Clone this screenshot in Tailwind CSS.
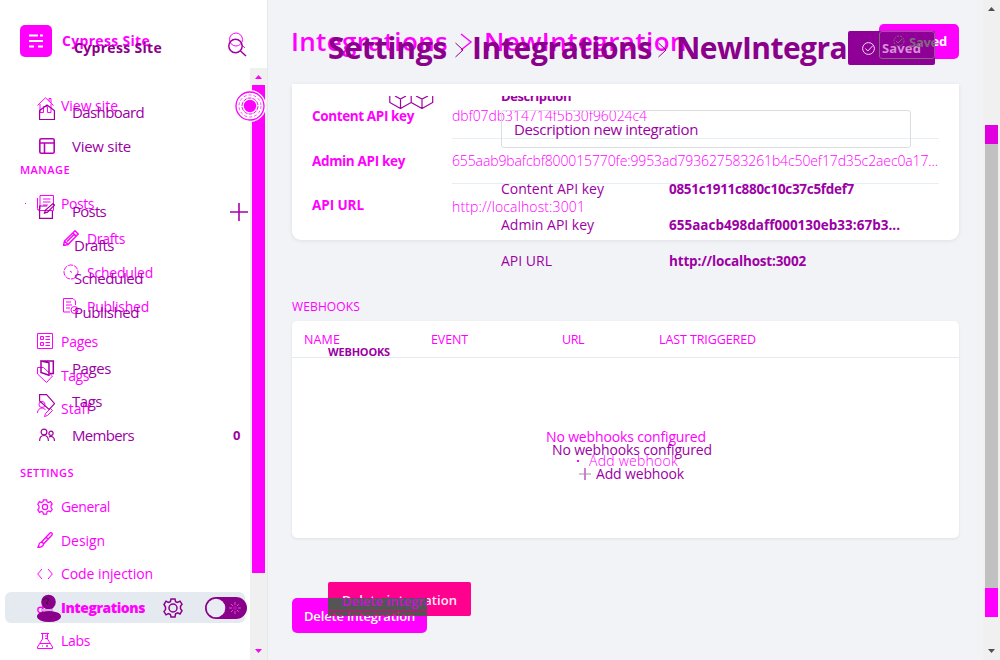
<!DOCTYPE html>
<html lang="en">
<head>
<meta charset="utf-8">
<title>Integrations</title>
<script src="https://cdn.jsdelivr.net/npm/@tailwindcss/browser@4"></script>
</head>
<body class="overflow-hidden bg-[#f2f3f7] font-['Open_Sans','Noto_Sans',sans-serif]">
<div class="grid h-[660px] w-[1000px] overflow-hidden whitespace-nowrap">

<!-- First page state -->
<div class="col-start-1 row-start-1 flex h-[660px] w-[1000px] overflow-hidden text-[#ff00ff]">
  <aside class="flex h-full w-[268px] shrink-0 border-r border-[#e4e8ee] bg-white text-[14px]">
    <nav class="h-full w-[250px] shrink-0">
      <div class="flex h-[88px] items-start pt-[25px] pl-[20px]">
        <svg class="size-[32px] shrink-0" viewBox="0 0 32 32"><rect width="32" height="32" rx="5" fill="#f0f"/><path d="M9 10.500h9M20 10.500h3M9 16h14M9 21.500h5M18 21.500h5" stroke="#fff" stroke-width="2.200"/></svg>
        <b class="ml-[10px] w-[88px] leading-[32px]" data-w="88">Cypress Site</b>
        <svg class="mt-[7px] ml-[77px] size-[19px]" viewBox="0 0 19 19" fill="none" stroke="#f0f"><circle cx="9" cy="7.500" r="6.500"/><path d="M14 12l4 4"/></svg>
      </div>
      <div class="flex h-[34px] items-center pt-px pl-[37px]"><svg class="mr-[7px] size-[17px]" viewBox="0 0 17 17" fill="none" stroke="#f0f"><path d="M.5 8.500L8.500.8 16.500 8.500M3 7v8.500h3.500v-6h4v6H14V7M12 4V1.500h2V6"/></svg><span data-w="57">View site</span></div>
      <div class="mt-[38px] flex h-[20px] items-center pl-[20px] text-[11px] font-semibold"><span data-w="50">MANAGE</span></div>
      <div class="mt-[6px] flex h-[34px] items-center pl-[25px]"><i class="mr-[11px] size-px bg-[#f0f]"></i><svg class="mr-[7px] size-[17px]" viewBox="0 0 17 17" fill="none" stroke="#f0f"><path d="M3 .5h13.500v15H2.500A2 2 0 0 1 .5 13.500V3M3 .5v13a1.500 1.500 0 0 1-2.500 1M6 4h7.500M6 7h7.500M6 10h5"/></svg><span data-w="33">Posts</span></div>
      <div class="mt-px flex h-[34px] items-center pl-[63px]"><svg class="mr-[8px] size-[16px]" viewBox="0 0 16 16" fill="none" stroke="#f0f" stroke-width="1.400"><path d="M.5 15.500l1-4.500L12 .8 15.200 4 5 14.500zM1.500 11L5 14.500M10 3l3.200 3.200M4 11.500l7-7"/></svg><span data-w="38">Drafts</span></div>
      <div class="flex h-[34px] items-center pl-[63px]"><svg class="mr-[8px] size-[16px]" viewBox="0 0 16 16" fill="none" stroke="#f0f"><circle cx="8" cy="8" r="7" stroke-dasharray="5 1"/><path d="M7 7l2 1.500"/></svg><span data-w="66">Scheduled</span></div>
      <div class="flex h-[34px] items-center pl-[63px]"><svg class="mr-[8px] size-[16px]" viewBox="0 0 16 16" fill="none" stroke="#f0f"><path d="M7 14H.5V.5H10L12.500 3v4M3 4h5M3 7h6M3 10h4"/><circle cx="11.500" cy="12" r="3.500"/><path d="M10 12l1 1 2-2"/></svg><span data-w="62">Published</span></div>
      <div class="mt-px flex h-[34px] items-center pl-[37px]"><svg class="mr-[8px] size-[16px]" viewBox="0 0 16 16" fill="none" stroke="#f0f"><path d="M.5.5h15v15H.5zM3.500 3.500h3v3h-3zM3.500 9.500h3v3h-3zM8.500 3.500H13M8.500 6.500H13M8.500 9.500H13M8.500 12.500H13"/></svg><span data-w="37">Pages</span></div>
      <div class="flex h-[34px] items-center pl-[37px]"><svg class="mr-[8px] size-[16px]" viewBox="0 0 16 16" fill="none" stroke="#f0f"><path d="M.5.5h6l9 8.500-6 6.500L.5 7z"/></svg><span data-w="28">Tags</span></div>
      <div class="flex h-[33px] items-center pl-[37px]"><svg class="mr-[8px] size-[16px]" viewBox="0 0 16 16" fill="none" stroke="#f0f"><circle cx="5" cy="3.500" r="3"/><path d="M.5 12c0-3 2-5 4.500-5 1.500 0 3 1 3.500 2M7.500 15.500l1-3 5-5 2 2-5 5z"/></svg><span data-w="30">Staff</span></div>
      <div class="mt-[38px] flex h-[20px] items-center pl-[20px] text-[11px] font-semibold"><span data-w="54">SETTINGS</span></div>
      <div class="mt-[6px] flex h-[34px] items-center pt-px pl-[37px]"><svg class="mr-[8px] size-[16px]" viewBox="0 0 20 20" fill="none" stroke="#f0f" stroke-width="1.500"><path d="M8 1h4l.6 2.600 2 .9 2.400-1.300 2 3-1.500 2v2.600l1.500 2-2 3.200-2.400-1.200-2 .9L12 19H8l-.6-2.500-2-.9L3 16.800l-2-3.200 1.500-2V9L1 6.500l2-3.300 2.400 1.300 2-.9z"/><circle cx="10" cy="10" r="3.300"/></svg><span data-w="49">General</span></div>
      <div class="flex h-[34px] items-center pl-[37px]"><svg class="mr-[8px] size-[16px]" viewBox="0 0 16 16" fill="none" stroke="#f0f" stroke-width="1.300"><path d="M.5 15.500c2-1 .5-4 3-5s4 2 2 3.500-3.500 1.500-5 1.500zM4.500 10L13 1c1-1 3 .5 2 2L6.500 12M9 5l2 2"/></svg><span data-w="44">Design</span></div>
      <div class="flex h-[33px] items-center pl-[37px]"><svg class="mr-[8px] size-[16px]" viewBox="0 0 16 16" fill="none" stroke="#f0f"><path d="M5 3L.7 8 5 13M11 3l4.300 5L11 13"/></svg><span data-w="92">Code injection</span></div>
      <div class="flex h-[34px] items-center pl-[5px]"><div class="flex h-[31px] w-[240px] items-center rounded-md bg-[#e5eaf1] pl-[32px]"><svg class="mr-[8px] size-[16px]" viewBox="0 0 16 16" fill="none" stroke="#f0f" stroke-width="1.400"><circle cx="3.500" cy="11" r="2.700"/><circle cx="12" cy="11" r="3"/><path d="M5 9l3-4"/></svg><span class="font-extrabold" data-w="84">Integrations</span></div></div>
      <div class="flex h-[33px] items-center pl-[37px]"><svg class="mr-[8px] size-[16px]" viewBox="0 0 16 16" fill="none" stroke="#f0f"><path d="M4 .5h8M5.500.5V6l-5 8v1.500h15V14l-5-8V.5M3 10.500h10M8 3h2.500M8 5.500h2.500M5 13h1M10 12v2M9 13h2"/></svg><span data-w="29">Labs</span></div>
    </nav>
    <div class="mt-[68px] flex h-[592px] w-[17px] shrink-0 flex-col items-center bg-[#f0f0f0]">
      <svg class="h-[17px] w-[9px]" viewBox="0 0 9 17"><path d="M1 11h7L4.500 7z" fill="#f0f"/></svg>
      <div class="h-[488px] w-[13px] bg-[#f0f]"></div>
      <svg class="mt-auto h-[17px] w-[9px]" viewBox="0 0 9 17"><path d="M1 6h7L4.500 10z" fill="#f0f"/></svg>
    </div>
  </aside>

  <main class="w-[715px] shrink-0 pl-[24px]">
    <header class="flex h-[84px] items-start pt-[24px] text-[26px] font-semibold">
      <span class="-ml-[1px] w-[157px] shrink-0 leading-[35px]" data-w="157">Integrations</span>
      <svg class="mt-[8px] mr-[11px] ml-[12px] h-[20px] w-[13px] shrink-0" viewBox="0 0 13 20" fill="none" stroke="#f0f" stroke-width="1.400"><path d="M1 2l10 8-10 8"/></svg>
      <span class="w-[204px] shrink-0 leading-[35px]" data-w="203">NewIntegration</span>
      <div class="ml-auto flex h-[35px] w-[80px] -translate-x-[24px] items-center justify-end rounded-[5px] bg-[#f0f] pr-[12px] text-[13px] font-bold text-white"><span data-w="37">Saved</span></div>
    </header>
    <section class="h-[156px] w-[667px] rounded-b-[9px] bg-white pt-[10px] pl-[20px] text-[14px] shadow-[0_1px_4px_rgba(0,0,0,0.08)]">
      <div class="flex h-[45px] w-[627px]"><b class="w-[140px] leading-[44px]"><span data-w="102" class="text-[13.500px]">Content API key</span></b><div class="h-[45px] flex-1 border-b border-[#e5eff5] font-light leading-[44px]"><span data-w="195">dbf07db314714f5b30f96024c4</span></div></div>
      <div class="flex h-[45px] w-[627px]"><b class="w-[140px] leading-[43px]"><span data-w="93" class="text-[13.500px]">Admin API key</span></b><div class="h-[45px] flex-1 border-b border-[#e5eff5] font-light leading-[44px]"><span data-w="486">655aab9bafcbf800015770fe:9953ad793627583261b4c50ef17d35c2aec0a17...</span></div></div>
      <div class="flex h-[45px] w-[627px]"><b class="w-[140px] leading-[42px]"><span data-w="52" class="text-[13.500px]">API URL</span></b><div class="font-light leading-[45px]"><span data-w="133">http://localhost:3001</span></div></div>
    </section>
    <h2 class="mt-[57px] h-[24px] text-[12px] leading-[19px]"><span data-w="68">WEBHOOKS</span></h2>
    <section class="h-[217px] w-[667px] rounded-[5px] bg-white shadow-[0_1px_3px_rgba(0,0,0,0.08)]">
      <div class="flex h-[37px] items-center border-b border-[#e5ebf1] pt-[3px] pl-[12px] text-[12.500px]">
        <div class="w-[127px]"><span data-w="36">NAME</span></div><div class="w-[131px]"><span data-w="37">EVENT</span></div><div class="w-[97px]"><span data-w="22">URL</span></div><div><span data-w="97">LAST TRIGGERED</span></div>
      </div>
      <div class="pt-[67px] pl-[254px] text-[14px] leading-[24px]"><span data-w="160">No webhooks configured</span><div class="flex items-center pl-[31px]"><i class="mr-[10px] size-[2px] bg-[#f0f]"></i><span class="font-light" data-w="89">Add webhook</span></div></div>
    </section>
    <div class="mt-[60px] flex h-[35px] w-[135px] items-center justify-center rounded-[5px] bg-[#f0f] pt-[3px] text-[13px] font-semibold text-white"><span data-w="111">Delete integration</span></div>
  </main>

  <div class="flex h-full w-[17px] shrink-0 flex-col items-center bg-[#f0f0f0]">
    <svg class="h-[17px] w-[9px]" viewBox="0 0 9 17"><path d="M1 11h7L4.500 7z" fill="#505050"/></svg>
    <div class="mt-[108px] h-[19px] w-[13px] bg-[#e000e0]"></div>
    <div class="h-[444px] w-[13px] bg-[#c1c1c1]"></div>
    <div class="h-[29px] w-[13px] bg-[#f0f]"></div>
    <svg class="mt-auto h-[17px] w-[9px]" viewBox="0 0 9 17"><path d="M1 6h7L4.500 10z" fill="#505050"/></svg>
  </div>
</div>

<!-- Second page state, laid over the first -->
<div class="relative col-start-1 row-start-1 flex h-[660px] w-[1000px] overflow-hidden text-[#9c00a4]">
  <nav class="flex h-full w-[268px] shrink-0 flex-col text-[15px]">
    <div class="flex h-[95px] items-start pt-[32px] pl-[74px] text-[#8b008b]">
      <b class="w-[88px] text-[14px] leading-[31px]" data-w="88">Cypress Site</b>
      <svg class="mt-[6px] ml-[66px] size-[19px]" viewBox="0 0 19 19" fill="none" stroke="#a000a0" stroke-width="1.500"><circle cx="7.500" cy="8" r="6.700"/><path d="M12.500 13l5.500 5"/></svg>
    </div>
    <div class="flex h-[34px] items-center pl-[39px]"><svg class="mr-[17px] size-[16px]" viewBox="0 0 16 16" fill="none" stroke="#a000a0" stroke-width="1.200"><path d="M.6 6.500L8 1l7.400 5.500v9H.6z"/></svg><span data-w="72">Dashboard</span></div>
    <div class="flex h-[34px] items-center pl-[39px]"><svg class="mr-[17px] size-[16px]" viewBox="0 0 16 16" fill="none" stroke="#b800b8" stroke-width="1.600"><rect x=".8" y=".8" width="14.400" height="14.400" rx="1.500"/><path d="M.8 5h14.400M5.500 5v10"/></svg><span data-w="59">View site</span></div>
    <div class="mt-[31px] flex h-[34px] items-center pl-[39px]"><svg class="mr-[17px] size-[16px]" viewBox="0 0 16 16" fill="none" stroke="#a000a0" stroke-width="1.200"><path d="M8 3H.6v12.400h12.800V8M5.500 10l1-3L14 .6l1.500 1.500-7 7z"/></svg><span class="w-[158px]" data-w="34">Posts</span><svg class="mt-[1px] size-[18px]" viewBox="0 0 18 18" stroke="#a800a8" stroke-width="1.600"><path d="M9 0v18M0 9h18"/></svg></div>
    <div class="flex h-[34px] items-center pl-[74px]"><span data-w="40">Drafts</span></div>
    <div class="flex h-[33px] items-center pl-[74px]"><span data-w="69">Scheduled</span></div>
    <div class="flex h-[34px] items-center pl-[74px]"><span data-w="65">Published</span></div>
    <div class="mt-[22px] flex h-[34px] items-center pl-[39px]"><svg class="mr-[17px] size-[16px]" viewBox="0 0 16 16" fill="none" stroke="#a000a0" stroke-width="1.500"><path d="M2 1h12.300v12.500H11M2 1l8 1.800v12.500L2 12.500z"/></svg><span data-w="39">Pages</span></div>
    <div class="flex h-[33px] items-center pl-[39px]"><svg class="mr-[17px] size-[16px]" viewBox="0 0 16 16" fill="none" stroke="#a000a0" stroke-width="1.200"><path d="M.6.6h7l8 9-5.500 5.800L.6 7z"/></svg><span data-w="30">Tags</span></div>
    <div class="flex h-[34px] items-center pl-[39px]"><svg class="mr-[17px] size-[16px]" viewBox="0 0 16 16" fill="none" stroke="#a000a0" stroke-width="1.200"><circle cx="5" cy="5" r="2.900"/><circle cx="12" cy="6.300" r="2.100"/><path d="M.6 14c0-3.500 2-5.500 4.400-5.500s4.400 2 4.400 5.500M10 10c3-1.500 5.500.5 5.500 4"/></svg><span class="w-[161px]" data-w="62">Members</span><span class="pt-[2px] text-[13px] font-bold">0</span></div>
    <div class="mt-[141px] flex h-[30px] items-center pl-[37px]">
      <svg class="-mr-px h-[28px] w-[24px]" viewBox="0 0 24 28"><circle cx="11.500" cy="8" r="7.300" fill="#8b008b"/><ellipse cx="12" cy="22.500" rx="12" ry="5.500" fill="#8b008b"/><rect x="4" y="15" width="12" height="2" fill="#cfabda"/><path d="M6 6l3-2 3 2-3 3 2 1" fill="none" stroke="#301030"/></svg>
      <svg class="mr-[22px] ml-[103px] size-[20px]" viewBox="0 0 20 20" fill="none" stroke="#8b008b" stroke-width="1.500"><path d="M8 1h4l.6 2.600 2 .9 2.400-1.300 2 3-1.500 2v2.600l1.500 2-2 3.200-2.400-1.200-2 .9L12 19H8l-.6-2.500-2-.9L3 16.800l-2-3.200 1.500-2V9L1 6.500l2-3.300 2.400 1.300 2-.9z"/><circle cx="10" cy="10" r="4"/></svg>
      <svg class="h-[22px] w-[42px]" viewBox="0 0 42 22"><rect width="42" height="22" rx="11" fill="#8b008b"/><circle cx="11" cy="11" r="9.300" fill="#e9edf3"/><path d="M30 5v3M30 14v3M24 11h3M33 11h3M26 7l2 2M32 13l2 2M34 7l-2 2M28 13l-2 2" stroke="#c65cc6"/><circle cx="30" cy="11" r="2" fill="#c000c0"/></svg>
    </div>
  </nav>
  <main class="h-full w-[715px] shrink-0">
    <header class="flex h-[96px] items-start pt-[31px] pl-[60px] text-[30px] font-bold text-[#8b008b]">
      <div class="flex h-[40px] w-[520px] shrink-0 items-start overflow-hidden leading-[33px]">
        <span class="w-[119px] shrink-0" data-w="119">Settings</span>
        <svg class="mt-[11px] mr-[8px] ml-[8px] h-[16px] w-[9px] shrink-0" viewBox="0 0 9 16" fill="none" stroke="#8b008b"><path d="M.5 1L8 8 .5 15"/></svg>
        <span class="w-[180px] shrink-0" data-w="180">Integrations</span>
        <svg class="mt-[11px] mr-[9px] ml-[6px] h-[16px] w-[9px] shrink-0" viewBox="0 0 9 16" fill="none" stroke="#8b008b"><path d="M.5 1L8 8 .5 15"/></svg>
        <span class="shrink-0" data-w="171">NewIntegra</span>
      </div>
      <div class="flex h-[34px] w-[87px] shrink-0 items-center rounded-[2px] bg-[#8f0096] pt-[1px] pl-[14px] text-[13px] text-[#f3dff3]">
        <svg class="mr-[7px] size-[13px]" viewBox="0 0 13 13" fill="none" stroke="#f3dff3"><circle cx="6.500" cy="6.500" r="5.900"/><path d="M3.500 6.500l2.300 2.500L11 3.500"/></svg><span class="pt-px text-[#d890d8]" data-w="39">Saved</span>
      </div>
    </header>
    <div class="h-[564px] overflow-hidden">
      <div class="flex h-[14px]">
        <svg class="ml-[121px] h-[13px] w-[45px] shrink-0" viewBox="0 0 45 13" fill="none" stroke="#a000a0" stroke-width="1.200"><path d="M.8 0v6.500L11.500 12.500 22.200 6.500V0M22.200 6.500L33 12.500l10.700-6V0M6 0l5.500 3L17 0M11.500 3v9.500M27 0l6 3 6-3M33 3v9.500"/></svg>
        <span class="-mt-[9px] ml-[67px] h-[18px] text-[13px] font-bold leading-[18px]" data-w="70">Description</span>
      </div>
      <div class="ml-[233px] flex h-[38px] w-[410px] items-center rounded-[3px] border border-[#dcdde0] pl-[12px] text-[15px]"><span data-w="184">Description new integration</span></div>
      <div class="mt-[23px] ml-[233px] text-[14px] leading-[36px]">
        <div class="flex h-[36px]"><div class="w-[168px]"><span data-w="103">Content API key</span></div><b class="font-bold"><span class="text-[13.500px]" data-w="185">0851c1911c880c10c37c5fdef7</span></b></div>
        <div class="flex h-[36px]"><div class="w-[168px]"><span data-w="93">Admin API key</span></div><b class="font-bold"><span class="text-[13.500px]" data-w="231">655aacb498daff000130eb33:67b3...</span></b></div>
        <div class="flex h-[36px]"><div class="w-[168px]"><span data-w="51">API URL</span></div><b class="font-bold"><span class="text-[13.500px]" data-w="137">http://localhost:3002</span></b></div>
      </div>
      <div class="mt-[63px] ml-[60px] h-[20px] text-[11px] font-bold leading-[20px]"><span data-w="62">WEBHOOKS</span></div>
      <div class="mt-[76px] ml-[284px] text-[14px] leading-[24px]"><span data-w="160">No webhooks configured</span><div class="flex items-center pl-[27px]"><svg class="mr-[5px] size-[12px]" viewBox="0 0 12 12" stroke="#a000a0"><path d="M6 0v12"/><path d="M0 6h12" stroke="#a88ca8"/></svg><span data-w="88">Add webhook</span></div></div>
      <div class="mt-[96px] ml-[60px] flex h-[34px] w-[143px] items-center justify-center rounded-[2px] bg-[#ff008f] pt-[3px] text-[13px] font-semibold text-[#ffe8f5]"><span data-w="115">Delete integration</span></div>
    </div>
  </main>

  <!-- Regions where the two states intersect, and the pointer beacon -->
  <div class="absolute top-[31px] left-[879px] flex h-[28px] w-[56px] justify-end overflow-hidden rounded-[3px] border border-[#80687e]"><svg class="absolute top-[3px] left-[13px] size-[12px]" viewBox="0 0 12 12" fill="none" stroke="#80687e"><circle cx="6" cy="6" r="5" stroke-dasharray="2 1"/><path d="M3 6l2 2 4-4"/></svg><span class="w-[25px] text-[13px] font-bold leading-[20px] text-[#80687e]" data-w="37">Saved</span></div>
  <div class="absolute top-[598px] left-[328px] h-[18px] w-[99px] overflow-hidden bg-[#555555]">
    <span class="absolute -top-[7px] left-[14px] text-[13px] font-semibold leading-[20px] text-[#d010d8]" data-w="115">Delete integration</span>
    <i class="absolute bottom-[4px] left-0 h-px w-full bg-[#e00080]"></i>
    <span class="absolute top-[9px] -left-[24px] text-[13px] font-semibold leading-[20px] text-[#ff008f]" data-w="111">Delete integration</span>
  </div>
  <svg class="absolute top-[90px] left-[234px] size-[32px]" viewBox="0 0 32 32" fill="none"><circle cx="16" cy="16" r="15" stroke="#fff" stroke-width="2"/><circle cx="16" cy="16" r="14" fill="#fff" stroke="#f0f" stroke-width="1.300"/><circle cx="16" cy="16" r="11" stroke="#f0f" stroke-dasharray="3 2" stroke-width=".7"/><circle cx="16" cy="16" r="8" stroke="#f0f" stroke-dasharray="4 1"/><circle cx="16" cy="16" r="6.200" fill="#f0f"/></svg>
</div>
</div>
<script>
// Set each label to its nominal width by adjusting the tracking.
function fitLabels() {
  document.querySelectorAll('[data-w]').forEach(function (el) {
    el.style.letterSpacing = '0px';
    var range = document.createRange();
    range.selectNodeContents(el);
    var gap = Number(el.dataset.w) - range.getBoundingClientRect().width;
    el.style.letterSpacing = (gap / el.textContent.length) + 'px';
  });
}
fitLabels();
window.addEventListener('load', fitLabels);
document.fonts.ready.then(fitLabels);
new ResizeObserver(fitLabels).observe(document.body);
requestAnimationFrame(fitLabels);
setTimeout(fitLabels, 50);
</script>
</body>
</html>
